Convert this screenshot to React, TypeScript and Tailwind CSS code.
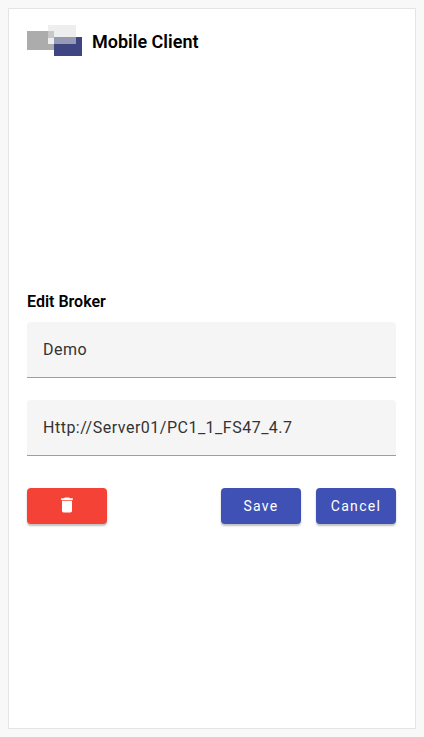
import { MdDelete } from "react-icons/md";

const Logo = () => (
  <svg width="55" height="31" viewBox="0 0 55 31" className="shrink-0">
    <rect x="0" y="6" width="27" height="19" fill="#acacac" />
    <rect x="27" y="12" width="28" height="19" fill="#3f4580" />
    <rect x="21" y="0" width="28" height="19" fill="#e0e0e0" fillOpacity="0.55" />
    <rect x="21" y="13" width="6" height="6" fill="#eeeeee" />
  </svg>
);

const Field = ({ value }: { value: string }) => (
  <div className="h-14 flex items-center px-4 bg-[#f5f5f5] rounded-t border-b border-[#9e9e9e] text-base tracking-[0.5px] text-[#333333]">
    {value}
  </div>
);

const ActionButton = ({ label }: { label: string }) => (
  <button className="w-20 h-9 rounded bg-[#3f51b5] text-white text-sm font-normal tracking-[1.3px] shadow-[0_2px_2px_rgba(0,0,0,0.25)]">
    {label}
  </button>
);

export default function App() {
  return (
    <div className="h-[737px] bg-[#f8f8f8] p-2 font-['Roboto',sans-serif]">
      <div className="h-[721px] bg-white border border-[#e4e4e4] pl-[18px] pr-[19px] pt-4">
        <header className="flex items-center gap-[10px]">
          <Logo />
          <h1 className="pt-[2px] text-lg font-semibold text-black">Mobile Client</h1>
        </header>

        <h2 className="mt-[234px] text-base leading-6 font-semibold text-black">Edit Broker</h2>

        <div className="mt-[8px] flex flex-col gap-[22px]">
          <Field value="Demo" />
          <Field value="Http://Server01/PC1_1_FS47_4.7" />
        </div>

        <div className="mt-8 flex items-center gap-[15px]">
          <button className="w-20 h-9 rounded bg-[#f44336] text-white flex items-center justify-center mr-auto shadow-[0_2px_2px_rgba(0,0,0,0.25)]">
            <MdDelete className="w-5 h-5 mb-[2px]" />
          </button>
          <ActionButton label="Save" />
          <ActionButton label="Cancel" />
        </div>
      </div>
    </div>
  );
}
